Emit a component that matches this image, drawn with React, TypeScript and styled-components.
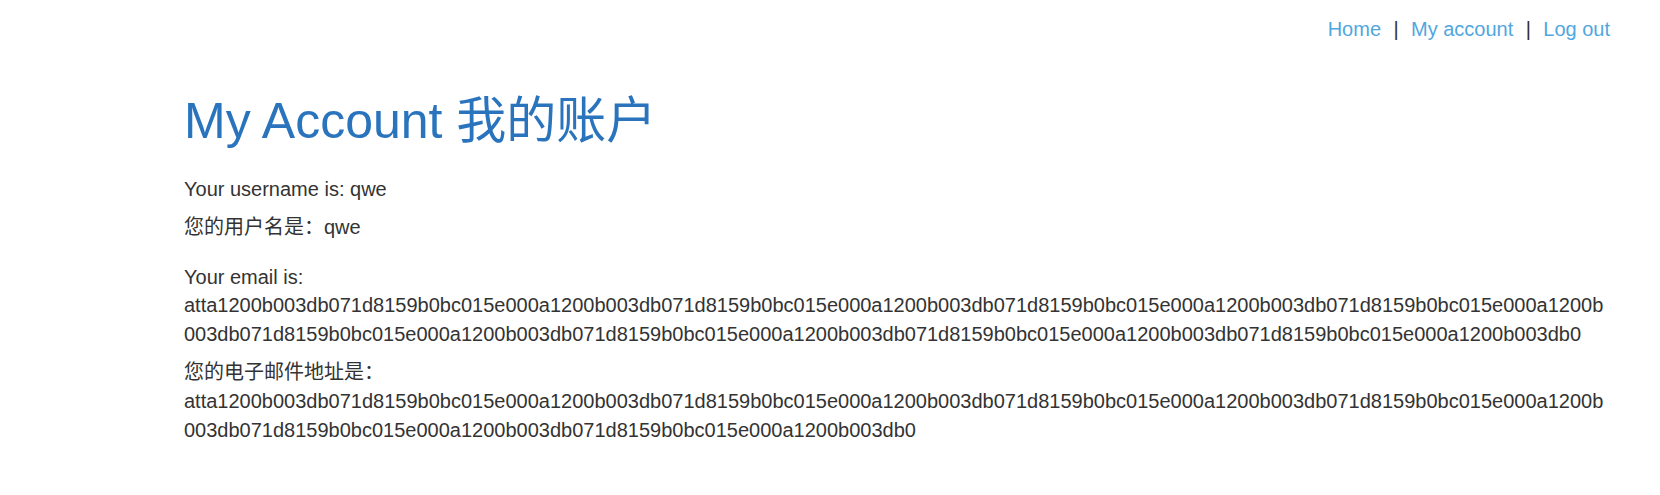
import React from "react";
import styled, { createGlobalStyle } from "styled-components";

const GlobalStyle = createGlobalStyle`
  html, body {
    margin: 0;
    padding: 0;
    background: #ffffff;
  }
  body {
    font-family: "Liberation Sans", Arial, "Noto Sans CJK SC", sans-serif;
    font-size: 20px;
    line-height: 28.57px;
    color: #333333;
  }
`;

const Page = styled.div`
  padding: 0 50px 40px 184px;
`;

const Nav = styled.nav`
  display: flex;
  justify-content: flex-end;
  align-items: baseline;
  gap: 12.4px;
  padding-top: 15px;
`;

const NavLink = styled.a`
  color: #50a7e0;
  text-decoration: none;
  cursor: pointer;
`;

const Separator = styled.span`
  color: #333333;
`;

const Title = styled.h1`
  margin: 50px 0 27px;
  font-size: 50px;
  font-weight: 400;
  line-height: 54px;
  color: #2a74bd;
`;

const Para = styled.p`
  margin: 0 0 10px;
  overflow-wrap: break-word;
  word-wrap: break-word;
`;

const Section = styled.div<{ $gap?: number }>`
  margin-top: ${(p) => p.$gap ?? 0}px;
`;

const emailA =
  "atta" + "1200b003db071d8159b0bc015e000a".repeat(8) + "1200b003db0";
const emailB =
  "atta" + "1200b003db071d8159b0bc015e000a".repeat(6) + "1200b003db0";

export default function App() {
  return (
    <>
      <GlobalStyle />
      <Page>
        <Nav>
          <NavLink>Home</NavLink>
          <Separator>|</Separator>
          <NavLink>My account</NavLink>
          <Separator>|</Separator>
          <NavLink>Log out</NavLink>
        </Nav>
        <Title>My Account 我的账户</Title>
        <Section>
          <Para>Your username is: qwe</Para>
          <Para>您的用户名是：qwe</Para>
        </Section>
        <Section $gap={21}>
          <Para>Your email is: {emailA}</Para>
          <Para>您的电子邮件地址是：{emailB}</Para>
        </Section>
      </Page>
    </>
  );
}
